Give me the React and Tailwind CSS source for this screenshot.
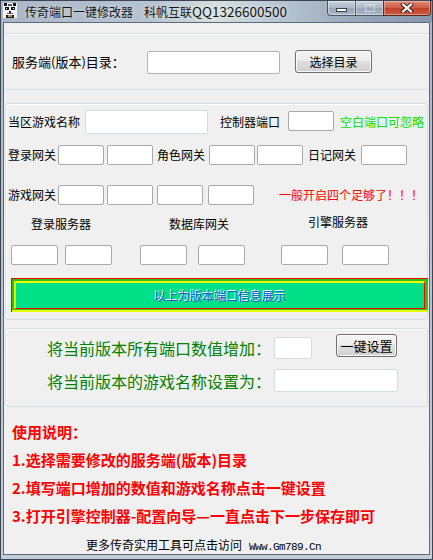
const Inp = ({ w, h = 20, tone = "dark", className = "" }) => {
  const b =
    tone === "dark"
      ? "border-[#a9a9a9]"
      : tone === "mid"
      ? "border-[#b3b3b3]"
      : "border-[#d6dce4]";
  return (
    <div
      className={`shrink-0 bg-white border ${b} rounded-[2px] ${className}`}
      style={{ width: w, height: h }}
    />
  );
};

const Btn = ({ children, className = "" }) => (
  <div
    className={`shrink-0 flex items-center justify-center border border-[#707070] rounded-[3px] bg-[linear-gradient(#f4f4f4,#ececec_50%,#dedede_50%,#d0d0d0)] shadow-[inset_0_0_0_1px_#fcfcfc] text-black ${className}`}
  >
    {children}
  </div>
);

function Icon() {
  return (
    <svg width="14" height="15" viewBox="0 0 14 15" className="shrink-0">
      <rect x="0" y="0" width="14" height="15" fill="#f4f4f4" />
      <rect x="1" y="0" width="3" height="3" fill="#111" />
      <rect x="10" y="0" width="3" height="3" fill="#111" />
      <rect x="5" y="1" width="4" height="2" fill="#555" />
      <rect x="2" y="4" width="4" height="3" fill="#111" />
      <rect x="8" y="4" width="4" height="3" fill="#111" />
      <rect x="3" y="5" width="1" height="1" fill="#fff" />
      <rect x="10" y="5" width="1" height="1" fill="#fff" />
      <rect x="6" y="8" width="2" height="2" fill="#222" />
      <rect x="4" y="10" width="6" height="1" fill="#666" />
      <rect x="3" y="12" width="8" height="3" fill="#222" />
      <rect x="5" y="12" width="4" height="2" fill="#c84" />
    </svg>
  );
}

export default function App() {
  return (
    <div className="w-[433px] h-[560px] flex flex-col border border-[#3d4552] bg-[#b4c0ce] font-['Noto_Sans_CJK_SC',sans-serif] overflow-hidden">
      {/* Title bar */}
      <div className="h-[21px] shrink-0 flex items-start bg-[linear-gradient(90deg,#a9b7c9_0%,#b6c3d2_35%,#d6dfdc_50%,#c0ccd6_60%,#94a3b8_85%,#8797ad_100%)]">
        <div className="ml-[2px] mt-[2px]">
          <Icon />
        </div>
        <div className="ml-[8px] mt-[3px] leading-[14px] text-[12px] text-[#151515] whitespace-nowrap [text-shadow:0_0_4px_rgba(255,255,255,0.7)]">
          传奇端口一键修改器
          <span className="ml-[11px]">科帆互联</span>
          <span className="text-[13.5px]">QQ1326600500</span>
        </div>
        <div className="ml-auto mr-[1px] flex h-[15px]">
          <div className="w-[29px] h-full flex items-center justify-center pt-[3px] border border-t-0 border-[#4a5668] rounded-bl-[4px] bg-[linear-gradient(#c9d2de,#a9b6c7_50%,#98a6b9_50%,#a8b5c6)] shadow-[inset_0_0_0_1px_rgba(255,255,255,0.45)]">
            <div className="w-[11px] h-[4px] bg-white border border-[#39424f]" />
          </div>
          <div className="w-[27px] h-full flex items-center justify-center border-b border-[#4a5668] bg-[linear-gradient(#c9d2de,#a9b6c7_50%,#98a6b9_50%,#a8b5c6)] shadow-[inset_0_0_0_1px_rgba(255,255,255,0.45)]">
            <div className="w-[10px] h-[8px] border border-[#d6dde6] border-t-[2px] opacity-80" />
          </div>
          <div className="w-[48px] h-full flex items-center justify-center border border-t-0 border-[#5a2a22] rounded-br-[4px] bg-[linear-gradient(#e08a76,#cf5a44_50%,#bf3f28_50%,#cd5a40)] shadow-[inset_0_0_0_1px_rgba(255,255,255,0.35)]">
            <svg width="14" height="10" viewBox="0 0 14 10">
              <path d="M3 1.5 L11 8.5 M11 1.5 L3 8.5" stroke="#3a2320" strokeWidth="4" strokeLinecap="square" />
              <path d="M3 1.5 L11 8.5 M11 1.5 L3 8.5" stroke="#ffffff" strokeWidth="2.2" strokeLinecap="square" />
            </svg>
          </div>
        </div>
      </div>

      {/* Frame body */}
      <div className="flex-1 flex px-[2px] pb-[6px] bg-[linear-gradient(#a9b7c9,#c2ccd8)]">
        <div className="flex-1 flex flex-col border border-[#5f6b7a] bg-[#f0f0f0] text-black">
          {/* Group 1 */}
          <div className="mt-[10px] h-[57px] shrink-0 border-y border-[#d5dfe5] shadow-[inset_0_1px_0_#ffffff] flex items-center pl-[8px]">
            <div className="w-[135px] shrink-0 text-[13px] leading-[18px] whitespace-nowrap">
              服务端(版本)目录：
            </div>
            <Inp w={133} h={23} tone="mid" className="mt-[1px]" />
            <Btn className="ml-[15px] w-[77px] h-[23px] text-[12px] leading-[14px]">选择目录</Btn>
          </div>

          {/* Group 2 */}
          <div className="mt-[13px] ml-[1px] w-[423px] h-[217px] shrink-0 border border-[#d5dfe5] rounded-[3px] shadow-[inset_1px_1px_0_#ffffff] flex flex-col text-[12px] leading-[16px]">
            {/* row 1 */}
            <div className="mt-[6px] h-[24px] flex items-center pl-[2px]">
              <div className="w-[72px] shrink-0 whitespace-nowrap">当区游戏名称</div>
              <Inp w={123} h={24} tone="light" className="ml-[5px]" />
              <div className="ml-[12px] w-[60px] shrink-0 whitespace-nowrap">控制器端口</div>
              <Inp w={46} h={20} className="ml-[8px] -mt-[2px]" />
              <div className="ml-[6px] whitespace-nowrap text-[#00e600]">空白端口可忽略</div>
            </div>
            {/* row 2 */}
            <div className="mt-[11px] h-[20px] flex items-center pl-[2px]">
              <div className="w-[48px] shrink-0 whitespace-nowrap">登录网关</div>
              <Inp w={46} className="ml-[2px]" />
              <Inp w={46} className="ml-[3px]" />
              <div className="ml-[4px] w-[48px] shrink-0 whitespace-nowrap">角色网关</div>
              <Inp w={46} className="ml-[4px]" />
              <Inp w={46} className="ml-[2px]" />
              <div className="ml-[5px] w-[48px] shrink-0 whitespace-nowrap">日记网关</div>
              <Inp w={46} className="ml-[5px]" />
            </div>
            {/* row 3 */}
            <div className="mt-[20px] h-[20px] flex items-center pl-[2px]">
              <div className="w-[48px] shrink-0 whitespace-nowrap">游戏网关</div>
              <Inp w={46} className="ml-[2px]" />
              <Inp w={46} className="ml-[3px]" />
              <Inp w={46} className="ml-[4px]" />
              <Inp w={46} className="ml-[5px]" />
              <div className="ml-[25px] whitespace-nowrap text-[#ff0000]">一般开启四个足够了！！！</div>
            </div>
            {/* row 4 labels */}
            <div className="mt-[11px] h-[16px] flex items-center">
              <div className="ml-[25px] w-[60px] shrink-0 whitespace-nowrap">登录服务器</div>
              <div className="ml-[78px] w-[60px] shrink-0 whitespace-nowrap">数据库网关</div>
              <div className="ml-[79px] w-[60px] shrink-0 whitespace-nowrap mb-[5px]">引擎服务器</div>
            </div>
            {/* row 5 inputs */}
            <div className="mt-[13px] h-[20px] flex items-center">
              <Inp w={47} className="ml-[5px]" />
              <Inp w={47} className="ml-[7px]" />
              <Inp w={47} className="ml-[28px]" />
              <Inp w={47} className="ml-[11px]" />
              <Inp w={47} className="ml-[36px]" />
              <Inp w={47} className="ml-[14px]" />
            </div>
            {/* bar */}
            <div className="mt-[13px] ml-[5px] w-[417px] h-[34px] shrink-0 border-t border-l border-[#ff0000] bg-[#2fc010] pt-[2px] pl-[2px] pr-[3px] pb-[3px] shadow-[inset_0_-2px_0_#e6ff00]">
              <div className="h-full flex items-center justify-center border-t-2 border-l-2 border-b border-r border-[#e6ff00] border-b-[#ff0000] border-r-[#ff0000] bg-[#00e086] text-[12px] leading-[16px] text-[#1d57d6] [text-shadow:-1px_-1px_0_#ffffff]">
                以上为版本端口信息展示
              </div>
            </div>
          </div>

          {/* Group 3 */}
          <div className="mt-[8px] ml-[1px] w-[423px] h-[79px] shrink-0 border border-[#d5dfe5] rounded-[3px] shadow-[inset_1px_1px_0_#ffffff] flex flex-col">
            <div className="mt-[5px] flex items-start">
              <div className="ml-[41px] mt-[3px] w-[227px] h-[22px] shrink-0 whitespace-nowrap text-[16px] leading-[22px] text-[#008000]">
                将当前版本所有端口数值增加：
              </div>
              <Inp w={38} h={22} tone="light" className="mt-[3px]" />
              <Btn className="ml-[24px] w-[61px] h-[23px] text-[13px] leading-[16px]">一键设置</Btn>
            </div>
            <div className="mt-[10px] flex items-center">
              <div className="ml-[41px] w-[227px] shrink-0 whitespace-nowrap text-[16px] leading-[22px] text-[#008000]">
                将当前版本的游戏名称设置为：
              </div>
              <Inp w={124} h={23} tone="light" />
            </div>
          </div>

          {/* Instructions */}
          <div className="mt-[11px] pl-[8px] text-[15px] leading-[28px] font-bold text-[#ff0000] whitespace-nowrap">
            <div>使用说明：</div>
            <div>1.选择需要修改的服务端(版本)目录</div>
            <div>2.填写端口增加的数值和游戏名称点击一键设置</div>
            <div>3.打开引擎控制器-配置向导—一直点击下一步保存即可</div>
          </div>

          {/* Footer */}
          <div className="mt-[8px] pl-[82px] text-[12px] leading-[14px] whitespace-nowrap text-black">
            更多传奇实用工具可点击访问
            <span className="ml-[7px] font-['Liberation_Mono',monospace] text-[11px] tracking-[-0.6px]">Www.Gm789.Cn</span>
          </div>
        </div>
      </div>
    </div>
  );
}
